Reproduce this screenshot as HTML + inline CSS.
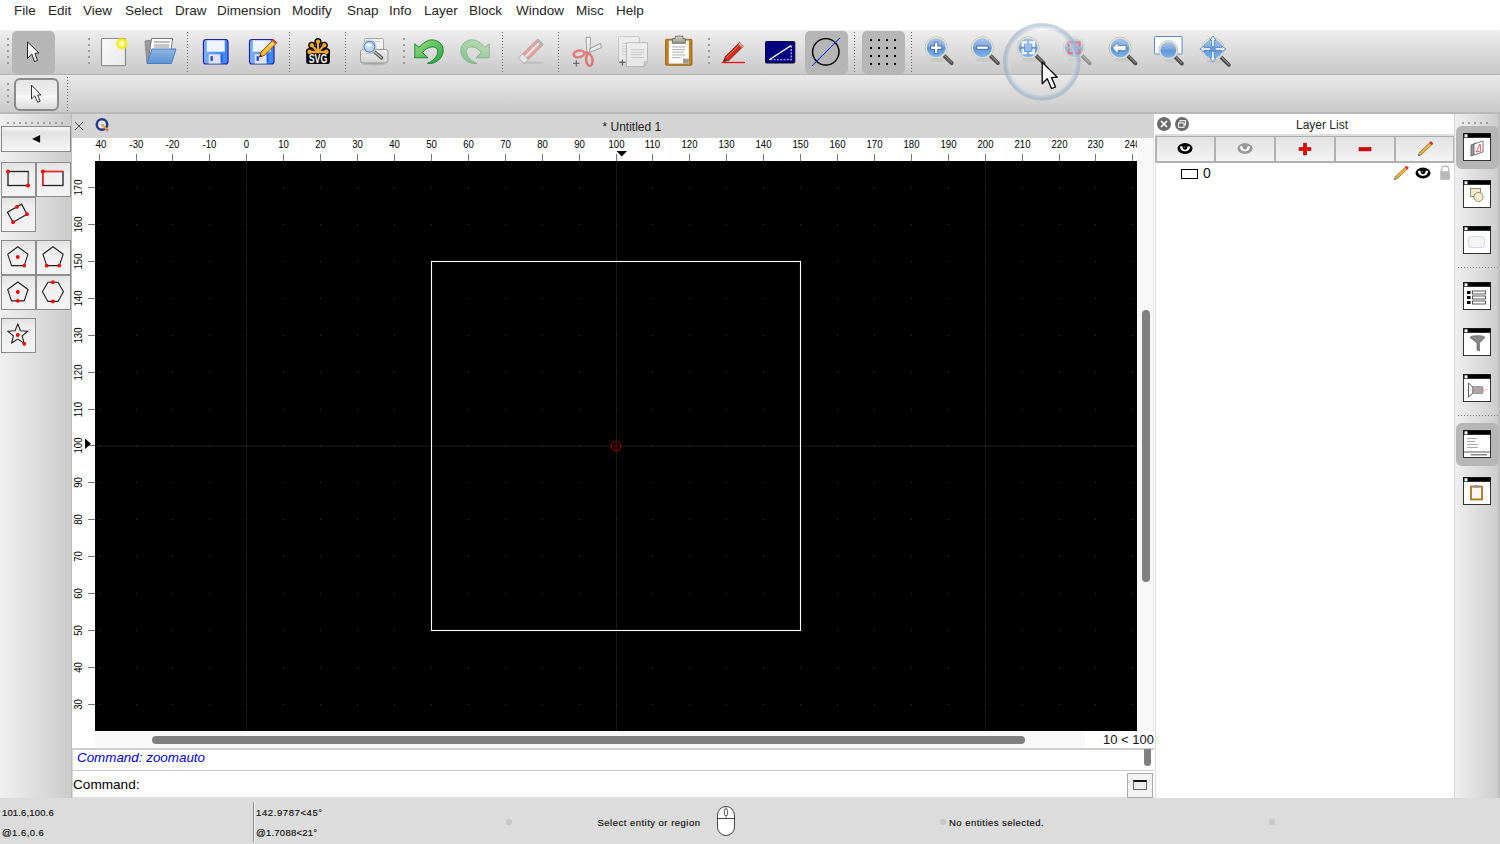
<!DOCTYPE html><html><head><meta charset="utf-8"><style>
*{margin:0;padding:0;box-sizing:border-box}
html,body{width:1500px;height:844px;overflow:hidden;background:#ececec;font-family:"Liberation Sans",sans-serif;position:relative}
.a{position:absolute}
.menu{left:0;top:0;width:1500px;height:30px;background:#fff}
.menu span{position:absolute;top:3px;font-size:13.5px;color:#262626;line-height:16px;white-space:nowrap}
.tb1{left:0;top:30px;width:1500px;height:45px;background:linear-gradient(#eeeeee,#c9c9c9);border-bottom:1px solid #b2b2b2}
.tb2{left:0;top:75px;width:1500px;height:39px;background:linear-gradient(#e8e8e8,#cbcbcb);border-bottom:2px solid #b9b9b9}
.sel{background:#b6b6b6;border-radius:5px}
.rl{position:absolute;font-size:9px;line-height:10px;color:#000;white-space:nowrap}
.st{position:absolute;font-size:9.5px;line-height:11px;color:#111;white-space:nowrap;-webkit-text-stroke:0.15px #111}
.tbtn{position:absolute;width:35px;height:35px;border:1px solid #8c8c8c;background:linear-gradient(#e2e2e2,#efefef 30%,#f3f3f3)}
</style></head><body>
<div class="a menu">
<span style="left:14px">File</span>
<span style="left:48px">Edit</span>
<span style="left:83px">View</span>
<span style="left:125px">Select</span>
<span style="left:175px">Draw</span>
<span style="left:217px">Dimension</span>
<span style="left:292px">Modify</span>
<span style="left:347px">Snap</span>
<span style="left:389px">Info</span>
<span style="left:424px">Layer</span>
<span style="left:469px">Block</span>
<span style="left:516px">Window</span>
<span style="left:576px">Misc</span>
<span style="left:616px">Help</span>
</div>
<div class="a tb1"></div><div class="a tb2"></div>
<div class="a sel" style="left:12px;top:31px;width:43px;height:43px"></div>
<div class="a sel" style="left:805px;top:31px;width:43px;height:43px"></div>
<div class="a sel" style="left:862px;top:31px;width:43px;height:43px"></div>
<div class="a" style="left:14px;top:78px;width:45px;height:33px;border:2px solid #8a8a8a;border-radius:6px;background:linear-gradient(#e4e4e4,#f1f1f1 50%,#fafafa 55%,#dadada)"></div>
<div class="a" style="left:71px;top:114px;width:1083px;height:24px;background:#d4d4d4"></div>
<div class="a" style="left:72px;top:138px;width:1065px;height:23px;background:#fff"></div>
<div class="a" style="left:72px;top:161px;width:23px;height:587px;background:#fff"></div>
<div class="a" style="left:95px;top:161px;width:1042px;height:570px;background:#000"></div>
<div class="a" style="left:1137px;top:138px;width:17px;height:610px;background:#f8f8f8;border-left:1px solid #fbfbfb;border-right:1px solid #e6e6e6"></div>
<div class="a" style="left:95px;top:731px;width:1042px;height:17px;background:#f8f8f8"></div>
<div class="a" style="left:1142px;top:310px;width:8px;height:272px;background:#808080;border-radius:4px"></div>
<div class="a" style="left:152px;top:736px;width:873px;height:8px;background:#808080;border-radius:4px"></div>
<div class="a" style="left:1085px;top:731px;width:69px;height:17px;background:#fff"></div>
<div class="a" style="left:1060px;top:731px;width:94px;height:17px;font-size:13px;line-height:17px;text-align:right;padding-right:0px;color:#111;white-space:nowrap">10 &lt; 100</div>
<div class="a" style="left:602.5px;top:119.5px;font-size:12px;line-height:14px;color:#1e1e1e;white-space:nowrap">* Untitled 1</div>
<div class="a" style="left:72px;top:748px;width:1082px;height:49px;background:#fff;border-top:2px solid #cdcdcd;border-left:1px solid #d8d8d8"></div>
<div class="a" style="left:72px;top:770px;width:1082px;height:1px;background:#c9c9c9"></div>
<div class="a" style="left:77px;top:750px;font-size:13.4px;line-height:16px;color:#0000cc;font-style:italic;white-space:nowrap">Command: zoomauto</div>
<div class="a" style="left:73px;top:777px;font-size:13.6px;line-height:16px;color:#000;white-space:nowrap">Command:</div>
<div class="a" style="left:1144px;top:749px;width:7px;height:17px;background:#808080;border-radius:0 0 3.5px 3.5px"></div>
<div class="a" style="left:0;top:797px;width:1500px;height:47px;background:#dcdcdc"></div>
<div class="st" style="left:2px;top:806.5px;letter-spacing:0.15px">101.6,100.6</div>
<div class="st" style="left:2px;top:827px;letter-spacing:0.45px">@1.6,0.6</div>
<div class="a" style="left:253px;top:802px;width:1px;height:40px;background:#8c8c8c;border-right:1px solid #fafafa;width:2px"></div>
<div class="st" style="left:256px;top:806.5px;letter-spacing:0.6px">142.9787&lt;45°</div>
<div class="st" style="left:256px;top:827px;letter-spacing:0.25px">@1.7088&lt;21°</div>
<div class="st" style="left:597.5px;top:816.5px;letter-spacing:0.48px">Select entity or region</div>
<div class="st" style="left:949px;top:817px;letter-spacing:0.46px">No entities selected.</div>
<div class="a" style="left:506px;top:819px;width:6px;height:6px;border-radius:3px;background:#c6c6c6"></div>
<div class="a" style="left:940px;top:819px;width:6px;height:6px;border-radius:3px;background:#c6c6c6"></div>
<div class="a" style="left:1269px;top:819px;width:6px;height:6px;border-radius:3px;background:#c6c6c6"></div>
<div class="a" style="left:1127px;top:773px;width:26px;height:25px;border:1px solid #aaa;background:linear-gradient(#f4f4f4,#f2f2f2)"></div>
<div class="a" style="left:1133px;top:780px;width:14px;height:10px;border:1px solid #666;border-top:2.5px solid #111;background:#efefef"></div>
<div class="a" style="left:0;top:114px;width:72px;height:684px;background:linear-gradient(90deg,#f0f0f0,#cbcbcb);border-right:1.5px solid #bcbcbc"></div>
<div class="a" style="left:1px;top:126px;width:70px;height:26px;border:1px solid #8a8a8a;background:linear-gradient(#f6f6f6,#e2e2e2 25%,#efefef 70%,#f6f6f6)"></div>
<div class="tbtn" style="left:1px;top:162px"></div>
<div class="tbtn" style="left:36px;top:162px"></div>
<div class="tbtn" style="left:1px;top:197px"></div>
<div class="tbtn" style="left:1px;top:240px"></div>
<div class="tbtn" style="left:36px;top:240px"></div>
<div class="tbtn" style="left:1px;top:275px"></div>
<div class="tbtn" style="left:36px;top:275px"></div>
<div class="tbtn" style="left:1px;top:318px"></div>
<div class="a" style="left:1154px;top:114px;width:301px;height:684px;background:#fff"></div>
<div class="a" style="left:1296px;top:118px;font-size:12px;line-height:14px;color:#262626;white-space:nowrap">Layer List</div>
<div class="a" style="left:1155px;top:134px;width:300px;height:2px;background:#dedede"></div>
<div class="a" style="left:1155px;top:136px;width:300px;height:27px;border:2px solid #b2b2b2;border-top:1.3px solid #acacac;background:linear-gradient(#e2e2e2,#f4f4f4)"></div>
<div class="a" style="left:1214px;top:136px;width:2px;height:27px;background:#b2b2b2"></div>
<div class="a" style="left:1274px;top:136px;width:2px;height:27px;background:#b2b2b2"></div>
<div class="a" style="left:1334px;top:136px;width:2px;height:27px;background:#b2b2b2"></div>
<div class="a" style="left:1394px;top:136px;width:2px;height:27px;background:#b2b2b2"></div>
<div class="a" style="left:1155px;top:162px;width:300px;height:636px;border-left:1px solid #dedede;border-right:1px solid #dedede"></div>
<div class="a" style="left:1203px;top:165px;font-size:14px;line-height:16px;color:#111">0</div>
<div class="a" style="left:1181px;top:169px;width:16.5px;height:10px;border:1.3px solid #000"></div>
<div class="a" style="left:1454px;top:114px;width:46px;height:684px;background:linear-gradient(90deg,#efefef,#cdcdcd);border-left:1px solid #d6d6d6;border-right:2px solid #c0c0c0"></div>
<div class="a sel" style="left:1456px;top:126px;width:43px;height:43px;border-radius:6px"></div>
<div class="a sel" style="left:1456px;top:423px;width:43px;height:43px;border-radius:6px"></div>
<svg class="a" style="left:0;top:0" width="1500" height="844"><defs>
<linearGradient id="gPage" x1="0" y1="0" x2="1" y2="1"><stop offset="0" stop-color="#fafafa"/><stop offset="1" stop-color="#e9e9e9"/></linearGradient>
<radialGradient id="gGlow"><stop offset="0" stop-color="#ffffff"/><stop offset="0.25" stop-color="#fbff9a"/><stop offset="0.6" stop-color="#f2ea20"/><stop offset="1" stop-color="#f2ea20" stop-opacity="0"/></radialGradient>
<linearGradient id="gFolder" x1="0" y1="0" x2="0" y2="1"><stop offset="0" stop-color="#8fb6e3"/><stop offset="1" stop-color="#5d92d3"/></linearGradient>
<linearGradient id="gFloppy" x1="0" y1="0" x2="1" y2="0"><stop offset="0" stop-color="#7fb6ff"/><stop offset="0.5" stop-color="#4f95f6"/><stop offset="1" stop-color="#3a86f5"/></linearGradient>
<linearGradient id="gUndo" x1="0" y1="0" x2="1" y2="1"><stop offset="0" stop-color="#9ad97c"/><stop offset="1" stop-color="#27a246"/></linearGradient>
<linearGradient id="gLens" x1="0" y1="0" x2="0" y2="1"><stop offset="0" stop-color="#a9c6ea"/><stop offset="0.45" stop-color="#7ea8dc"/><stop offset="0.5" stop-color="#5f95d6"/><stop offset="1" stop-color="#7fb4ef"/></linearGradient>
<linearGradient id="gPrinter" x1="0" y1="0" x2="0" y2="1"><stop offset="0" stop-color="#f6f6f6"/><stop offset="1" stop-color="#cfcfcf"/></linearGradient>
<linearGradient id="gClip" x1="0" y1="0" x2="0" y2="1"><stop offset="0" stop-color="#d9d9c9"/><stop offset="1" stop-color="#8f9084"/></linearGradient>
<linearGradient id="gPencil" x1="0" y1="0" x2="1" y2="0"><stop offset="0" stop-color="#f7b500"/><stop offset="1" stop-color="#ffe070"/></linearGradient>
</defs><rect x="7" y="38" width="2" height="2" fill="#9c9c9c"/><rect x="7" y="44" width="2" height="2" fill="#9c9c9c"/><rect x="7" y="50" width="2" height="2" fill="#9c9c9c"/><rect x="7" y="56" width="2" height="2" fill="#9c9c9c"/><rect x="7" y="62" width="2" height="2" fill="#9c9c9c"/><rect x="88" y="38" width="2" height="2" fill="#9c9c9c"/><rect x="88" y="44" width="2" height="2" fill="#9c9c9c"/><rect x="88" y="50" width="2" height="2" fill="#9c9c9c"/><rect x="88" y="56" width="2" height="2" fill="#9c9c9c"/><rect x="88" y="62" width="2" height="2" fill="#9c9c9c"/><rect x="403" y="38" width="2" height="2" fill="#9c9c9c"/><rect x="403" y="44" width="2" height="2" fill="#9c9c9c"/><rect x="403" y="50" width="2" height="2" fill="#9c9c9c"/><rect x="403" y="56" width="2" height="2" fill="#9c9c9c"/><rect x="403" y="62" width="2" height="2" fill="#9c9c9c"/><rect x="708" y="38" width="2" height="2" fill="#9c9c9c"/><rect x="708" y="44" width="2" height="2" fill="#9c9c9c"/><rect x="708" y="50" width="2" height="2" fill="#9c9c9c"/><rect x="708" y="56" width="2" height="2" fill="#9c9c9c"/><rect x="708" y="62" width="2" height="2" fill="#9c9c9c"/><line x1="187.5" y1="32" x2="187.5" y2="73" stroke="#6a6a6a" stroke-width="1" stroke-dasharray="1 2"/><line x1="289.5" y1="32" x2="289.5" y2="73" stroke="#6a6a6a" stroke-width="1" stroke-dasharray="1 2"/><line x1="345.5" y1="32" x2="345.5" y2="73" stroke="#6a6a6a" stroke-width="1" stroke-dasharray="1 2"/><line x1="502.5" y1="32" x2="502.5" y2="73" stroke="#6a6a6a" stroke-width="1" stroke-dasharray="1 2"/><line x1="558.5" y1="32" x2="558.5" y2="73" stroke="#6a6a6a" stroke-width="1" stroke-dasharray="1 2"/><line x1="854.5" y1="32" x2="854.5" y2="73" stroke="#6a6a6a" stroke-width="1" stroke-dasharray="1 2"/><line x1="911.5" y1="32" x2="911.5" y2="73" stroke="#6a6a6a" stroke-width="1" stroke-dasharray="1 2"/><rect x="7" y="83" width="2" height="2" fill="#9c9c9c"/><rect x="7" y="89" width="2" height="2" fill="#9c9c9c"/><rect x="7" y="95" width="2" height="2" fill="#9c9c9c"/><rect x="7" y="101" width="2" height="2" fill="#9c9c9c"/><line x1="67.5" y1="77" x2="67.5" y2="112" stroke="#6a6a6a" stroke-width="1" stroke-dasharray="1 2"/><path d="M27.5,42 L27.5,58.5 L31.8,54 L34.5,61.5 L37.5,60.3 L34.9,53.3 L39,53 Z" fill="#fff" stroke="#222" stroke-width="1" stroke-linejoin="round"/><path d="M31.5,85 L31.5,99 L34.8,95.8 L37.6,102.3 L40.2,101.2 L37.6,95 L41,95 Z" fill="#fff" stroke="#333" stroke-width="1" stroke-linejoin="round"/><rect x="101.5" y="38.5" width="24" height="27" rx="1" fill="url(#gPage)" stroke="#8a8a8a" stroke-width="1.2"/><line x1="102" y1="65.8" x2="125" y2="65.8" stroke="#9a9a9a" stroke-width="1"/><circle cx="121.8" cy="43.6" r="7" fill="url(#gGlow)"/><path d="M145,41 L152,40 L152,62 L147,63 Z" fill="#9a9a9a" stroke="#777" stroke-width="0.8"/><path d="M151.5,38.5 L172.7,38.5 L171,50 L148,63 Z" fill="#fafafa" stroke="#7a7a7a" stroke-width="1"/><rect x="154" y="41" width="16" height="2" fill="#bdbdbd"/><rect x="154" y="44" width="15" height="4" fill="#c6c6c6"/><path d="M152,49 L176,49 L171.5,63.5 L147,63.5 Z" fill="url(#gFolder)" stroke="#4c7fc1" stroke-width="1" stroke-linejoin="round"/><rect x="203.5" y="39.5" width="24.5" height="24.5" rx="2.5" fill="url(#gFloppy)" stroke="#2424a0" stroke-width="1.2"/><rect x="206.8" y="40.3" width="17.9" height="11.4" fill="#f0f4ff"/><rect x="208.7" y="54.3" width="11.9" height="9.3" fill="#e2e2ea"/><rect x="210.6" y="56.2" width="2.2" height="4.7" fill="#1a3ee0"/><rect x="220.8" y="54" width="1.8" height="8" fill="#1d5cf0"/><rect x="249.5" y="39.5" width="24.5" height="24.5" rx="2.5" fill="url(#gFloppy)" stroke="#2424a0" stroke-width="1.2"/><rect x="252.8" y="40.3" width="17.9" height="11.4" fill="#f0f4ff"/><rect x="254.7" y="54.3" width="11.9" height="9.3" fill="#e2e2ea"/><rect x="256.6" y="56.2" width="2.2" height="4.7" fill="#1a3ee0"/><rect x="266.8" y="54" width="1.8" height="8" fill="#1d5cf0"/><path d="M259.5,57 L261,52 L273.5,39.5 L276.8,42.8 L264.2,55.4 Z" fill="url(#gPencil)" stroke="#a0320a" stroke-width="0.9" stroke-linejoin="round"/><path d="M259.5,57 L260.3,54.4 L262,56.2 Z" fill="#222"/><path d="M272,41 L273.5,39.5 L276.8,42.8 L275.3,44.3 Z" fill="#e04a2a"/><rect x="306.2" y="48.6" width="23.7" height="15.3" rx="2.5" fill="#000"/><line x1="318" y1="52" x2="309.5" y2="51.8" stroke="#000" stroke-width="4.6" stroke-linecap="round"/><circle cx="309.5" cy="51.8" r="3.6" fill="#000"/><line x1="318" y1="52" x2="311.8" y2="45.3" stroke="#000" stroke-width="4.6" stroke-linecap="round"/><circle cx="311.8" cy="45.3" r="3.6" fill="#000"/><line x1="318" y1="52" x2="318" y2="41.6" stroke="#000" stroke-width="4.6" stroke-linecap="round"/><circle cx="318" cy="41.6" r="3.6" fill="#000"/><line x1="318" y1="52" x2="324.2" y2="45.3" stroke="#000" stroke-width="4.6" stroke-linecap="round"/><circle cx="324.2" cy="45.3" r="3.6" fill="#000"/><line x1="318" y1="52" x2="326.5" y2="51.8" stroke="#000" stroke-width="4.6" stroke-linecap="round"/><circle cx="326.5" cy="51.8" r="3.6" fill="#000"/><line x1="318" y1="52" x2="309.5" y2="51.8" stroke="#f5a72a" stroke-width="2.2" stroke-linecap="round"/><circle cx="309.5" cy="51.8" r="2.2" fill="#f5a72a"/><line x1="318" y1="52" x2="311.8" y2="45.3" stroke="#f5a72a" stroke-width="2.2" stroke-linecap="round"/><circle cx="311.8" cy="45.3" r="2.2" fill="#f5a72a"/><line x1="318" y1="52" x2="318" y2="41.6" stroke="#f5a72a" stroke-width="2.2" stroke-linecap="round"/><circle cx="318" cy="41.6" r="2.2" fill="#f5a72a"/><line x1="318" y1="52" x2="324.2" y2="45.3" stroke="#f5a72a" stroke-width="2.2" stroke-linecap="round"/><circle cx="324.2" cy="45.3" r="2.2" fill="#f5a72a"/><line x1="318" y1="52" x2="326.5" y2="51.8" stroke="#f5a72a" stroke-width="2.2" stroke-linecap="round"/><circle cx="326.5" cy="51.8" r="2.2" fill="#f5a72a"/><path d="M307.5,52.3 Q318,50 328.5,52.3 L328.5,53.3 L307.5,53.3 Z" fill="#f5a72a"/><text x="318" y="63.2" text-anchor="middle" font-family="Liberation Sans" font-weight="bold" font-size="13" fill="#fff" textLength="18.6" lengthAdjust="spacingAndGlyphs">SVG</text><rect x="364.5" y="38.5" width="19" height="13" rx="1" fill="#f2f2f2" stroke="#a8a8a8" stroke-width="1"/><rect x="367" y="41" width="13" height="1.2" fill="#cfcfcf"/><rect x="360.5" y="49.5" width="27.5" height="13.5" rx="2.5" fill="url(#gPrinter)" stroke="#9a9a9a" stroke-width="1"/><rect x="363" y="53.5" width="22" height="1" fill="#d8d8d8"/><ellipse cx="374" cy="64.2" rx="12" ry="1.2" fill="#000" opacity="0.12"/><line x1="373.5" y1="51" x2="381.6" y2="57.9" stroke="#555" stroke-width="3.4" stroke-linecap="round"/><line x1="373.8" y1="51.3" x2="381.2" y2="57.5" stroke="#bdbdbd" stroke-width="1.4" stroke-linecap="round"/><circle cx="369.4" cy="46.8" r="6.8" fill="#fafafa" stroke="#b5b5b5" stroke-width="0.8"/><circle cx="369.4" cy="46.8" r="5.4" fill="#c3d6ee" stroke="#4f86cf" stroke-width="1.2"/><ellipse cx="368.5" cy="45" rx="3.2" ry="2.2" fill="#e8f0fa"/><path d="M414.8,43.8 L414.8,57.8 L428,57.8 L422.3,52.5 C425,50 428,46.9 432,46.9 C436,46.9 438,49 437.6,52.5 C437,57 433,61 427.4,63.4 C436,64.5 443.2,58 443.2,50.5 C443.2,44 438,39.9 432,39.9 C427,39.9 423,43 419,47.4 Z" fill="url(#gUndo)" stroke="#168a33" stroke-width="1" stroke-linejoin="round"/><g transform="translate(904,0) scale(-1,1)" opacity="0.45"><path d="M414.8,43.8 L414.8,57.8 L428,57.8 L422.3,52.5 C425,50 428,46.9 432,46.9 C436,46.9 438,49 437.6,52.5 C437,57 433,61 427.4,63.4 C436,64.5 443.2,58 443.2,50.5 C443.2,44 438,39.9 432,39.9 C427,39.9 423,43 419,47.4 Z" fill="url(#gUndo)" stroke="#168a33" stroke-width="1" stroke-linejoin="round"/></g><ellipse cx="533" cy="62.8" rx="11" ry="1.4" fill="#b8b8b8" opacity="0.7"/><g transform="rotate(-45 531 51.2)" opacity="0.62"><rect x="517.5" y="47.2" width="27" height="8" rx="0.8" fill="#e87c7c" stroke="#b55" stroke-width="0.7"/><rect x="522" y="50.1" width="21" height="2.2" fill="#f6f6f6"/><rect x="517.5" y="47.2" width="5.5" height="8" fill="#f2f2f2" stroke="#999" stroke-width="0.6"/><rect x="542" y="47.2" width="2.5" height="8" fill="#9a9a9a"/></g><g opacity="0.6"><path d="M586,37.5 L590.6,37 L589.8,52.8 L586.8,52 Z" fill="#f8f8f8" stroke="#555" stroke-width="0.8" stroke-linejoin="round"/><path d="M590,48.5 L600.8,43.4 L601.2,47.7 L589.8,52.5 Z" fill="#f8f8f8" stroke="#555" stroke-width="0.8" stroke-linejoin="round"/><ellipse cx="579" cy="53.9" rx="5.4" ry="3.3" transform="rotate(-12 579 53.9)" fill="none" stroke="#e03c3c" stroke-width="2.5"/><ellipse cx="589.3" cy="59.9" rx="3.2" ry="6" transform="rotate(-6 589.3 59.9)" fill="none" stroke="#e03c3c" stroke-width="2.5"/><path d="M584,52.5 L587.5,52.8 L588.6,54.5" fill="none" stroke="#e03c3c" stroke-width="2.5"/></g><path d="M573,63.3 H579.5 M576.3,60.3 V66.5" stroke="#555" stroke-width="1" fill="none"/><g opacity="0.6"><rect x="618.5" y="36.7" width="21" height="25" rx="1" fill="#f4f4f4" stroke="#aaa" stroke-width="0.9"/><rect x="622" y="43.2" width="6" height="0.8" fill="#bbb"/><rect x="622" y="45.8" width="6" height="0.8" fill="#bbb"/><rect x="622" y="48.5" width="6" height="0.8" fill="#bbb"/><rect x="622" y="51.2" width="6" height="0.8" fill="#bbb"/><rect x="622" y="53.8" width="6" height="0.8" fill="#bbb"/><path d="M626.5,42.7 H647.5 V61.5 L644,66.7 H626.5 Z" fill="#f6f6f6" stroke="#999" stroke-width="0.9"/><path d="M647.5,61.5 L644,61.5 L644,66.7 Z" fill="#c8c8c8" stroke="#999" stroke-width="0.5"/><rect x="631" y="49.2" width="13.5" height="0.9" fill="#b5b5b5"/><rect x="631" y="51.7" width="13" height="0.9" fill="#b5b5b5"/><rect x="631" y="54.2" width="11.5" height="0.9" fill="#b5b5b5"/><rect x="631" y="57" width="13.5" height="0.9" fill="#b5b5b5"/></g><path d="M619.2,62.3 H625.5 M622.4,59.5 V65.7" stroke="#555" stroke-width="1" fill="none"/><rect x="665.5" y="39.3" width="26.5" height="26" rx="1" fill="#c0801f" stroke="#8a5a12" stroke-width="0.8"/><rect x="668.8" y="40.6" width="20" height="23" fill="#fbfbfb"/><path d="M683,58.7 H688.8 V63.6 H683 Z" fill="#9b9b94"/><rect x="672.2" y="46.5" width="13.5" height="0.9" fill="#aaa"/><rect x="672.2" y="49.2" width="13" height="0.9" fill="#aaa"/><rect x="672.2" y="51.7" width="11.5" height="0.9" fill="#aaa"/><rect x="672.2" y="54.5" width="13.5" height="0.9" fill="#aaa"/><rect x="672.2" y="57.2" width="8.5" height="0.9" fill="#aaa"/><path d="M675.3,36.2 H683 V38.6 H685.3 V43.3 H672.3 V38.6 H675.3 Z" fill="url(#gClip)" stroke="#5f6058" stroke-width="0.8"/><line x1="721.7" y1="62.5" x2="745" y2="62.5" stroke="#f00" stroke-width="1.3"/><path d="M723.5,61.5 L725.3,56.6 L739.6,42.5 L743.3,46.2 L729,60.3 Z" fill="#dd2a1a" stroke="#6a1a0a" stroke-width="0.8" stroke-linejoin="round"/><path d="M726.5,57.5 L740.5,43.6" stroke="#f47a60" stroke-width="0.9"/><path d="M723.5,61.5 L724.5,58.6 L726.5,60.5 Z" fill="#333"/><path d="M738.2,43.9 L739.6,42.5 L743.3,46.2 L741.9,47.6 Z" fill="#e8b0b0"/><rect x="765.5" y="41.5" width="29.3" height="21.5" rx="1" fill="#000080" stroke="#0a0a30" stroke-width="1"/><path d="M769.2,59.8 L791.2,45.5 L791.2,59.8 Z" fill="none" stroke="#d8d8ff" stroke-width="1.1" stroke-dasharray="2 1.3"/><line x1="769.2" y1="59.8" x2="791.2" y2="45.5" stroke="#fff" stroke-width="1.1"/><circle cx="825.8" cy="51.8" r="13.2" fill="none" stroke="#000" stroke-width="1.4"/><line x1="812" y1="66" x2="840" y2="37.8" stroke="#0000ff" stroke-width="1"/><rect x="870" y="39" width="2" height="2" fill="#000"/><rect x="870" y="47" width="2" height="2" fill="#000"/><rect x="870" y="55" width="2" height="2" fill="#000"/><rect x="870" y="63" width="2" height="2" fill="#000"/><rect x="878" y="39" width="2" height="2" fill="#000"/><rect x="878" y="47" width="2" height="2" fill="#000"/><rect x="878" y="55" width="2" height="2" fill="#000"/><rect x="878" y="63" width="2" height="2" fill="#000"/><rect x="886" y="39" width="2" height="2" fill="#000"/><rect x="886" y="47" width="2" height="2" fill="#000"/><rect x="886" y="55" width="2" height="2" fill="#000"/><rect x="886" y="63" width="2" height="2" fill="#000"/><rect x="894" y="39" width="2" height="2" fill="#000"/><rect x="894" y="47" width="2" height="2" fill="#000"/><rect x="894" y="55" width="2" height="2" fill="#000"/><rect x="894" y="63" width="2" height="2" fill="#000"/><g><ellipse cx="939.2" cy="59.900000000000006" rx="9.7" ry="2.2" fill="#000" opacity="0.05"/><line x1="944.34" y1="55.84" x2="951.7" y2="63.2" stroke="#4d4d4d" stroke-width="3.8" stroke-linecap="round"/><line x1="944.94" y1="55.84" x2="951.5" y2="62.400000000000006" stroke="#8a8a8a" stroke-width="1.2" stroke-linecap="round"/><circle cx="936.2" cy="47.7" r="11.0" fill="#f4f4f0" stroke="#bdbdb0" stroke-width="0.9"/><circle cx="936.2" cy="47.7" r="9.7" fill="url(#gLens)" stroke="#d6d6cc" stroke-width="0.6"/></g><path d="M934.6,42.1 H937.8 V46.1 H941.8 V49.3 H937.8 V53.5 H934.6 V49.3 H930.6 V46.1 H934.6 Z" fill="#fff" stroke="#2a55a0" stroke-width="0.8"/><g><ellipse cx="985.4" cy="59.900000000000006" rx="9.7" ry="2.2" fill="#000" opacity="0.05"/><line x1="990.54" y1="55.84" x2="997.9" y2="63.2" stroke="#4d4d4d" stroke-width="3.8" stroke-linecap="round"/><line x1="991.14" y1="55.84" x2="997.6999999999999" y2="62.400000000000006" stroke="#8a8a8a" stroke-width="1.2" stroke-linecap="round"/><circle cx="982.4" cy="47.7" r="11.0" fill="#f4f4f0" stroke="#bdbdb0" stroke-width="0.9"/><circle cx="982.4" cy="47.7" r="9.7" fill="url(#gLens)" stroke="#d6d6cc" stroke-width="0.6"/></g><path d="M976.7,46.1 H988.2 V49.3 H976.7 Z" fill="#fff" stroke="#2a55a0" stroke-width="0.8"/><g><ellipse cx="1031.2" cy="59.900000000000006" rx="9.7" ry="2.2" fill="#000" opacity="0.05"/><line x1="1036.3400000000001" y1="55.84" x2="1043.7" y2="63.2" stroke="#4d4d4d" stroke-width="3.8" stroke-linecap="round"/><line x1="1036.94" y1="55.84" x2="1043.5" y2="62.400000000000006" stroke="#8a8a8a" stroke-width="1.2" stroke-linecap="round"/><circle cx="1028.2" cy="47.7" r="11.0" fill="#f4f4f0" stroke="#bdbdb0" stroke-width="0.9"/><circle cx="1028.2" cy="47.7" r="9.7" fill="url(#gLens)" stroke="#d6d6cc" stroke-width="0.6"/></g><rect x="1025" y="44.5" width="6.4" height="6.4" fill="#a8c4ea" opacity="0.8"/><path d="M1022.8000000000001,45.50000000000001 V42.300000000000004 H1026.0" fill="none" stroke="#fff" stroke-width="2.3" stroke-linecap="square"/><path d="M1022.8000000000001,49.9 V53.1 H1026.0" fill="none" stroke="#fff" stroke-width="2.3" stroke-linecap="square"/><path d="M1033.6000000000001,45.50000000000001 V42.300000000000004 H1030.4" fill="none" stroke="#fff" stroke-width="2.3" stroke-linecap="square"/><path d="M1033.6000000000001,49.9 V53.1 H1030.4" fill="none" stroke="#fff" stroke-width="2.3" stroke-linecap="square"/><g opacity="0.5"><ellipse cx="1077.1" cy="59.900000000000006" rx="9.7" ry="2.2" fill="#000" opacity="0.05"/><line x1="1082.24" y1="55.84" x2="1089.6" y2="63.2" stroke="#4d4d4d" stroke-width="3.8" stroke-linecap="round"/><line x1="1082.84" y1="55.84" x2="1089.3999999999999" y2="62.400000000000006" stroke="#8a8a8a" stroke-width="1.2" stroke-linecap="round"/><circle cx="1074.1" cy="47.7" r="11.0" fill="#f4f4f0" stroke="#bdbdb0" stroke-width="0.9"/><circle cx="1074.1" cy="47.7" r="9.7" fill="url(#gLens)" stroke="#d6d6cc" stroke-width="0.6"/></g><g opacity="0.75"><path d="M1068.6999999999998,45.50000000000001 V42.300000000000004 H1071.8999999999999" fill="none" stroke="#f06a6a" stroke-width="2.3" stroke-linecap="square"/><path d="M1068.6999999999998,49.9 V53.1 H1071.8999999999999" fill="none" stroke="#f06a6a" stroke-width="2.3" stroke-linecap="square"/><path d="M1079.5,45.50000000000001 V42.300000000000004 H1076.3" fill="none" stroke="#f06a6a" stroke-width="2.3" stroke-linecap="square"/><path d="M1079.5,49.9 V53.1 H1076.3" fill="none" stroke="#f06a6a" stroke-width="2.3" stroke-linecap="square"/></g><g><ellipse cx="1123" cy="60.2" rx="9.7" ry="2.2" fill="#000" opacity="0.05"/><line x1="1128.14" y1="56.14" x2="1135.5" y2="63.5" stroke="#4d4d4d" stroke-width="3.8" stroke-linecap="round"/><line x1="1128.74" y1="56.14" x2="1135.3" y2="62.7" stroke="#8a8a8a" stroke-width="1.2" stroke-linecap="round"/><circle cx="1120" cy="48" r="11.0" fill="#f4f4f0" stroke="#bdbdb0" stroke-width="0.9"/><circle cx="1120" cy="48" r="9.7" fill="url(#gLens)" stroke="#d6d6cc" stroke-width="0.6"/></g><path d="M1112.5,48 L1118,42.6 V45.6 H1126 V50.6 H1118 V53.6 Z" fill="#fff" stroke="#3d6cb0" stroke-width="0.7"/><rect x="1154.5" y="36.5" width="27.5" height="17.5" rx="1" fill="#fff" stroke="#5a88cc" stroke-width="1"/><g><ellipse cx="1171.4" cy="60.8" rx="8.2" ry="2.2" fill="#000" opacity="0.05"/><line x1="1175.43" y1="57.13" x2="1181.9" y2="63.599999999999994" stroke="#4d4d4d" stroke-width="3.8" stroke-linecap="round"/><line x1="1176.03" y1="57.13" x2="1181.7" y2="62.8" stroke="#8a8a8a" stroke-width="1.2" stroke-linecap="round"/><circle cx="1168.4" cy="50.1" r="9.5" fill="#f4f4f0" stroke="#bdbdb0" stroke-width="0.9"/><circle cx="1168.4" cy="50.1" r="8.2" fill="url(#gLens)" stroke="#d6d6cc" stroke-width="0.6"/></g><g><ellipse cx="1215.9" cy="61.4" rx="9.9" ry="2.2" fill="#000" opacity="0.05"/><line x1="1221.188" y1="57.288" x2="1228.9" y2="65" stroke="#4d4d4d" stroke-width="3.8" stroke-linecap="round"/><line x1="1221.788" y1="57.288" x2="1228.7" y2="64.2" stroke="#8a8a8a" stroke-width="1.2" stroke-linecap="round"/><circle cx="1212.9" cy="49" r="11.200000000000001" fill="#f4f4f0" stroke="#bdbdb0" stroke-width="0.9"/><circle cx="1212.9" cy="49" r="9.9" fill="url(#gLens)" stroke="#d6d6cc" stroke-width="0.6"/></g><g transform="rotate(0 1212.9 49)"><path d="M1212.9,36 L1215.9,40.3 H1214.2 V46.8 H1211.6 V40.3 H1209.9 Z" fill="#fff" stroke="#3a78d0" stroke-width="0.8" stroke-linejoin="round"/></g><g transform="rotate(90 1212.9 49)"><path d="M1212.9,36 L1215.9,40.3 H1214.2 V46.8 H1211.6 V40.3 H1209.9 Z" fill="#fff" stroke="#3a78d0" stroke-width="0.8" stroke-linejoin="round"/></g><g transform="rotate(180 1212.9 49)"><path d="M1212.9,36 L1215.9,40.3 H1214.2 V46.8 H1211.6 V40.3 H1209.9 Z" fill="#fff" stroke="#3a78d0" stroke-width="0.8" stroke-linejoin="round"/></g><g transform="rotate(270 1212.9 49)"><path d="M1212.9,36 L1215.9,40.3 H1214.2 V46.8 H1211.6 V40.3 H1209.9 Z" fill="#fff" stroke="#3a78d0" stroke-width="0.8" stroke-linejoin="round"/></g><circle cx="1041.8" cy="61.7" r="37.3" fill="none" stroke="#8ca6c2" stroke-width="3" opacity="0.5"/><circle cx="1041.8" cy="61.7" r="35" fill="none" stroke="#a9bdd3" stroke-width="2" opacity="0.45"/><circle cx="1041.8" cy="61.7" r="33.2" fill="none" stroke="#cfdbe8" stroke-width="1.6" opacity="0.45"/><path d="M1042.2,62.3 L1042.2,83.7 L1047.3,78.8 L1051.5,88.6 L1055.5,87 L1051.5,77.6 L1057.3,77.2 Z" fill="#fff" stroke="#000" stroke-width="1.3" stroke-linejoin="round"/><defs><clipPath id="cv"><rect x="95" y="161" width="1042" height="570"/></clipPath><clipPath id="rt"><rect x="95" y="138" width="1042" height="23"/></clipPath><clipPath id="rl"><rect x="72" y="161" width="23" height="570"/></clipPath></defs><g clip-path="url(#cv)"><rect x="246" y="161" width="1" height="570" fill="#181818"/><rect x="616" y="161" width="1" height="570" fill="#181818"/><rect x="985" y="161" width="1" height="570" fill="#181818"/><rect x="95" y="445.5" width="1042" height="1" fill="#1c1c1c"/><rect x="99" y="704" width="1" height="1" fill="#3a3a3a"/><rect x="99" y="667" width="1" height="1" fill="#3a3a3a"/><rect x="99" y="630" width="1" height="1" fill="#3a3a3a"/><rect x="99" y="593" width="1" height="1" fill="#3a3a3a"/><rect x="99" y="556" width="1" height="1" fill="#3a3a3a"/><rect x="99" y="519" width="1" height="1" fill="#3a3a3a"/><rect x="99" y="482" width="1" height="1" fill="#3a3a3a"/><rect x="99" y="445" width="1" height="1" fill="#3a3a3a"/><rect x="99" y="409" width="1" height="1" fill="#3a3a3a"/><rect x="99" y="372" width="1" height="1" fill="#3a3a3a"/><rect x="99" y="335" width="1" height="1" fill="#3a3a3a"/><rect x="99" y="298" width="1" height="1" fill="#3a3a3a"/><rect x="99" y="261" width="1" height="1" fill="#3a3a3a"/><rect x="99" y="224" width="1" height="1" fill="#3a3a3a"/><rect x="99" y="187" width="1" height="1" fill="#3a3a3a"/><rect x="136" y="704" width="1" height="1" fill="#3a3a3a"/><rect x="136" y="667" width="1" height="1" fill="#3a3a3a"/><rect x="136" y="630" width="1" height="1" fill="#3a3a3a"/><rect x="136" y="593" width="1" height="1" fill="#3a3a3a"/><rect x="136" y="556" width="1" height="1" fill="#3a3a3a"/><rect x="136" y="519" width="1" height="1" fill="#3a3a3a"/><rect x="136" y="482" width="1" height="1" fill="#3a3a3a"/><rect x="136" y="445" width="1" height="1" fill="#3a3a3a"/><rect x="136" y="409" width="1" height="1" fill="#3a3a3a"/><rect x="136" y="372" width="1" height="1" fill="#3a3a3a"/><rect x="136" y="335" width="1" height="1" fill="#3a3a3a"/><rect x="136" y="298" width="1" height="1" fill="#3a3a3a"/><rect x="136" y="261" width="1" height="1" fill="#3a3a3a"/><rect x="136" y="224" width="1" height="1" fill="#3a3a3a"/><rect x="136" y="187" width="1" height="1" fill="#3a3a3a"/><rect x="172" y="704" width="1" height="1" fill="#3a3a3a"/><rect x="172" y="667" width="1" height="1" fill="#3a3a3a"/><rect x="172" y="630" width="1" height="1" fill="#3a3a3a"/><rect x="172" y="593" width="1" height="1" fill="#3a3a3a"/><rect x="172" y="556" width="1" height="1" fill="#3a3a3a"/><rect x="172" y="519" width="1" height="1" fill="#3a3a3a"/><rect x="172" y="482" width="1" height="1" fill="#3a3a3a"/><rect x="172" y="445" width="1" height="1" fill="#3a3a3a"/><rect x="172" y="409" width="1" height="1" fill="#3a3a3a"/><rect x="172" y="372" width="1" height="1" fill="#3a3a3a"/><rect x="172" y="335" width="1" height="1" fill="#3a3a3a"/><rect x="172" y="298" width="1" height="1" fill="#3a3a3a"/><rect x="172" y="261" width="1" height="1" fill="#3a3a3a"/><rect x="172" y="224" width="1" height="1" fill="#3a3a3a"/><rect x="172" y="187" width="1" height="1" fill="#3a3a3a"/><rect x="209" y="704" width="1" height="1" fill="#3a3a3a"/><rect x="209" y="667" width="1" height="1" fill="#3a3a3a"/><rect x="209" y="630" width="1" height="1" fill="#3a3a3a"/><rect x="209" y="593" width="1" height="1" fill="#3a3a3a"/><rect x="209" y="556" width="1" height="1" fill="#3a3a3a"/><rect x="209" y="519" width="1" height="1" fill="#3a3a3a"/><rect x="209" y="482" width="1" height="1" fill="#3a3a3a"/><rect x="209" y="445" width="1" height="1" fill="#3a3a3a"/><rect x="209" y="409" width="1" height="1" fill="#3a3a3a"/><rect x="209" y="372" width="1" height="1" fill="#3a3a3a"/><rect x="209" y="335" width="1" height="1" fill="#3a3a3a"/><rect x="209" y="298" width="1" height="1" fill="#3a3a3a"/><rect x="209" y="261" width="1" height="1" fill="#3a3a3a"/><rect x="209" y="224" width="1" height="1" fill="#3a3a3a"/><rect x="209" y="187" width="1" height="1" fill="#3a3a3a"/><rect x="246" y="704" width="1" height="1" fill="#3a3a3a"/><rect x="246" y="667" width="1" height="1" fill="#3a3a3a"/><rect x="246" y="630" width="1" height="1" fill="#3a3a3a"/><rect x="246" y="593" width="1" height="1" fill="#3a3a3a"/><rect x="246" y="556" width="1" height="1" fill="#3a3a3a"/><rect x="246" y="519" width="1" height="1" fill="#3a3a3a"/><rect x="246" y="482" width="1" height="1" fill="#3a3a3a"/><rect x="246" y="445" width="1" height="1" fill="#3a3a3a"/><rect x="246" y="409" width="1" height="1" fill="#3a3a3a"/><rect x="246" y="372" width="1" height="1" fill="#3a3a3a"/><rect x="246" y="335" width="1" height="1" fill="#3a3a3a"/><rect x="246" y="298" width="1" height="1" fill="#3a3a3a"/><rect x="246" y="261" width="1" height="1" fill="#3a3a3a"/><rect x="246" y="224" width="1" height="1" fill="#3a3a3a"/><rect x="246" y="187" width="1" height="1" fill="#3a3a3a"/><rect x="283" y="704" width="1" height="1" fill="#3a3a3a"/><rect x="283" y="667" width="1" height="1" fill="#3a3a3a"/><rect x="283" y="630" width="1" height="1" fill="#3a3a3a"/><rect x="283" y="593" width="1" height="1" fill="#3a3a3a"/><rect x="283" y="556" width="1" height="1" fill="#3a3a3a"/><rect x="283" y="519" width="1" height="1" fill="#3a3a3a"/><rect x="283" y="482" width="1" height="1" fill="#3a3a3a"/><rect x="283" y="445" width="1" height="1" fill="#3a3a3a"/><rect x="283" y="409" width="1" height="1" fill="#3a3a3a"/><rect x="283" y="372" width="1" height="1" fill="#3a3a3a"/><rect x="283" y="335" width="1" height="1" fill="#3a3a3a"/><rect x="283" y="298" width="1" height="1" fill="#3a3a3a"/><rect x="283" y="261" width="1" height="1" fill="#3a3a3a"/><rect x="283" y="224" width="1" height="1" fill="#3a3a3a"/><rect x="283" y="187" width="1" height="1" fill="#3a3a3a"/><rect x="320" y="704" width="1" height="1" fill="#3a3a3a"/><rect x="320" y="667" width="1" height="1" fill="#3a3a3a"/><rect x="320" y="630" width="1" height="1" fill="#3a3a3a"/><rect x="320" y="593" width="1" height="1" fill="#3a3a3a"/><rect x="320" y="556" width="1" height="1" fill="#3a3a3a"/><rect x="320" y="519" width="1" height="1" fill="#3a3a3a"/><rect x="320" y="482" width="1" height="1" fill="#3a3a3a"/><rect x="320" y="445" width="1" height="1" fill="#3a3a3a"/><rect x="320" y="409" width="1" height="1" fill="#3a3a3a"/><rect x="320" y="372" width="1" height="1" fill="#3a3a3a"/><rect x="320" y="335" width="1" height="1" fill="#3a3a3a"/><rect x="320" y="298" width="1" height="1" fill="#3a3a3a"/><rect x="320" y="261" width="1" height="1" fill="#3a3a3a"/><rect x="320" y="224" width="1" height="1" fill="#3a3a3a"/><rect x="320" y="187" width="1" height="1" fill="#3a3a3a"/><rect x="357" y="704" width="1" height="1" fill="#3a3a3a"/><rect x="357" y="667" width="1" height="1" fill="#3a3a3a"/><rect x="357" y="630" width="1" height="1" fill="#3a3a3a"/><rect x="357" y="593" width="1" height="1" fill="#3a3a3a"/><rect x="357" y="556" width="1" height="1" fill="#3a3a3a"/><rect x="357" y="519" width="1" height="1" fill="#3a3a3a"/><rect x="357" y="482" width="1" height="1" fill="#3a3a3a"/><rect x="357" y="445" width="1" height="1" fill="#3a3a3a"/><rect x="357" y="409" width="1" height="1" fill="#3a3a3a"/><rect x="357" y="372" width="1" height="1" fill="#3a3a3a"/><rect x="357" y="335" width="1" height="1" fill="#3a3a3a"/><rect x="357" y="298" width="1" height="1" fill="#3a3a3a"/><rect x="357" y="261" width="1" height="1" fill="#3a3a3a"/><rect x="357" y="224" width="1" height="1" fill="#3a3a3a"/><rect x="357" y="187" width="1" height="1" fill="#3a3a3a"/><rect x="394" y="704" width="1" height="1" fill="#3a3a3a"/><rect x="394" y="667" width="1" height="1" fill="#3a3a3a"/><rect x="394" y="630" width="1" height="1" fill="#3a3a3a"/><rect x="394" y="593" width="1" height="1" fill="#3a3a3a"/><rect x="394" y="556" width="1" height="1" fill="#3a3a3a"/><rect x="394" y="519" width="1" height="1" fill="#3a3a3a"/><rect x="394" y="482" width="1" height="1" fill="#3a3a3a"/><rect x="394" y="445" width="1" height="1" fill="#3a3a3a"/><rect x="394" y="409" width="1" height="1" fill="#3a3a3a"/><rect x="394" y="372" width="1" height="1" fill="#3a3a3a"/><rect x="394" y="335" width="1" height="1" fill="#3a3a3a"/><rect x="394" y="298" width="1" height="1" fill="#3a3a3a"/><rect x="394" y="261" width="1" height="1" fill="#3a3a3a"/><rect x="394" y="224" width="1" height="1" fill="#3a3a3a"/><rect x="394" y="187" width="1" height="1" fill="#3a3a3a"/><rect x="431" y="704" width="1" height="1" fill="#3a3a3a"/><rect x="431" y="667" width="1" height="1" fill="#3a3a3a"/><rect x="431" y="630" width="1" height="1" fill="#3a3a3a"/><rect x="431" y="593" width="1" height="1" fill="#3a3a3a"/><rect x="431" y="556" width="1" height="1" fill="#3a3a3a"/><rect x="431" y="519" width="1" height="1" fill="#3a3a3a"/><rect x="431" y="482" width="1" height="1" fill="#3a3a3a"/><rect x="431" y="445" width="1" height="1" fill="#3a3a3a"/><rect x="431" y="409" width="1" height="1" fill="#3a3a3a"/><rect x="431" y="372" width="1" height="1" fill="#3a3a3a"/><rect x="431" y="335" width="1" height="1" fill="#3a3a3a"/><rect x="431" y="298" width="1" height="1" fill="#3a3a3a"/><rect x="431" y="261" width="1" height="1" fill="#3a3a3a"/><rect x="431" y="224" width="1" height="1" fill="#3a3a3a"/><rect x="431" y="187" width="1" height="1" fill="#3a3a3a"/><rect x="468" y="704" width="1" height="1" fill="#3a3a3a"/><rect x="468" y="667" width="1" height="1" fill="#3a3a3a"/><rect x="468" y="630" width="1" height="1" fill="#3a3a3a"/><rect x="468" y="593" width="1" height="1" fill="#3a3a3a"/><rect x="468" y="556" width="1" height="1" fill="#3a3a3a"/><rect x="468" y="519" width="1" height="1" fill="#3a3a3a"/><rect x="468" y="482" width="1" height="1" fill="#3a3a3a"/><rect x="468" y="445" width="1" height="1" fill="#3a3a3a"/><rect x="468" y="409" width="1" height="1" fill="#3a3a3a"/><rect x="468" y="372" width="1" height="1" fill="#3a3a3a"/><rect x="468" y="335" width="1" height="1" fill="#3a3a3a"/><rect x="468" y="298" width="1" height="1" fill="#3a3a3a"/><rect x="468" y="261" width="1" height="1" fill="#3a3a3a"/><rect x="468" y="224" width="1" height="1" fill="#3a3a3a"/><rect x="468" y="187" width="1" height="1" fill="#3a3a3a"/><rect x="505" y="704" width="1" height="1" fill="#3a3a3a"/><rect x="505" y="667" width="1" height="1" fill="#3a3a3a"/><rect x="505" y="630" width="1" height="1" fill="#3a3a3a"/><rect x="505" y="593" width="1" height="1" fill="#3a3a3a"/><rect x="505" y="556" width="1" height="1" fill="#3a3a3a"/><rect x="505" y="519" width="1" height="1" fill="#3a3a3a"/><rect x="505" y="482" width="1" height="1" fill="#3a3a3a"/><rect x="505" y="445" width="1" height="1" fill="#3a3a3a"/><rect x="505" y="409" width="1" height="1" fill="#3a3a3a"/><rect x="505" y="372" width="1" height="1" fill="#3a3a3a"/><rect x="505" y="335" width="1" height="1" fill="#3a3a3a"/><rect x="505" y="298" width="1" height="1" fill="#3a3a3a"/><rect x="505" y="261" width="1" height="1" fill="#3a3a3a"/><rect x="505" y="224" width="1" height="1" fill="#3a3a3a"/><rect x="505" y="187" width="1" height="1" fill="#3a3a3a"/><rect x="542" y="704" width="1" height="1" fill="#3a3a3a"/><rect x="542" y="667" width="1" height="1" fill="#3a3a3a"/><rect x="542" y="630" width="1" height="1" fill="#3a3a3a"/><rect x="542" y="593" width="1" height="1" fill="#3a3a3a"/><rect x="542" y="556" width="1" height="1" fill="#3a3a3a"/><rect x="542" y="519" width="1" height="1" fill="#3a3a3a"/><rect x="542" y="482" width="1" height="1" fill="#3a3a3a"/><rect x="542" y="445" width="1" height="1" fill="#3a3a3a"/><rect x="542" y="409" width="1" height="1" fill="#3a3a3a"/><rect x="542" y="372" width="1" height="1" fill="#3a3a3a"/><rect x="542" y="335" width="1" height="1" fill="#3a3a3a"/><rect x="542" y="298" width="1" height="1" fill="#3a3a3a"/><rect x="542" y="261" width="1" height="1" fill="#3a3a3a"/><rect x="542" y="224" width="1" height="1" fill="#3a3a3a"/><rect x="542" y="187" width="1" height="1" fill="#3a3a3a"/><rect x="579" y="704" width="1" height="1" fill="#3a3a3a"/><rect x="579" y="667" width="1" height="1" fill="#3a3a3a"/><rect x="579" y="630" width="1" height="1" fill="#3a3a3a"/><rect x="579" y="593" width="1" height="1" fill="#3a3a3a"/><rect x="579" y="556" width="1" height="1" fill="#3a3a3a"/><rect x="579" y="519" width="1" height="1" fill="#3a3a3a"/><rect x="579" y="482" width="1" height="1" fill="#3a3a3a"/><rect x="579" y="445" width="1" height="1" fill="#3a3a3a"/><rect x="579" y="409" width="1" height="1" fill="#3a3a3a"/><rect x="579" y="372" width="1" height="1" fill="#3a3a3a"/><rect x="579" y="335" width="1" height="1" fill="#3a3a3a"/><rect x="579" y="298" width="1" height="1" fill="#3a3a3a"/><rect x="579" y="261" width="1" height="1" fill="#3a3a3a"/><rect x="579" y="224" width="1" height="1" fill="#3a3a3a"/><rect x="579" y="187" width="1" height="1" fill="#3a3a3a"/><rect x="616" y="704" width="1" height="1" fill="#3a3a3a"/><rect x="616" y="667" width="1" height="1" fill="#3a3a3a"/><rect x="616" y="630" width="1" height="1" fill="#3a3a3a"/><rect x="616" y="593" width="1" height="1" fill="#3a3a3a"/><rect x="616" y="556" width="1" height="1" fill="#3a3a3a"/><rect x="616" y="519" width="1" height="1" fill="#3a3a3a"/><rect x="616" y="482" width="1" height="1" fill="#3a3a3a"/><rect x="616" y="445" width="1" height="1" fill="#3a3a3a"/><rect x="616" y="409" width="1" height="1" fill="#3a3a3a"/><rect x="616" y="372" width="1" height="1" fill="#3a3a3a"/><rect x="616" y="335" width="1" height="1" fill="#3a3a3a"/><rect x="616" y="298" width="1" height="1" fill="#3a3a3a"/><rect x="616" y="261" width="1" height="1" fill="#3a3a3a"/><rect x="616" y="224" width="1" height="1" fill="#3a3a3a"/><rect x="616" y="187" width="1" height="1" fill="#3a3a3a"/><rect x="652" y="704" width="1" height="1" fill="#3a3a3a"/><rect x="652" y="667" width="1" height="1" fill="#3a3a3a"/><rect x="652" y="630" width="1" height="1" fill="#3a3a3a"/><rect x="652" y="593" width="1" height="1" fill="#3a3a3a"/><rect x="652" y="556" width="1" height="1" fill="#3a3a3a"/><rect x="652" y="519" width="1" height="1" fill="#3a3a3a"/><rect x="652" y="482" width="1" height="1" fill="#3a3a3a"/><rect x="652" y="445" width="1" height="1" fill="#3a3a3a"/><rect x="652" y="409" width="1" height="1" fill="#3a3a3a"/><rect x="652" y="372" width="1" height="1" fill="#3a3a3a"/><rect x="652" y="335" width="1" height="1" fill="#3a3a3a"/><rect x="652" y="298" width="1" height="1" fill="#3a3a3a"/><rect x="652" y="261" width="1" height="1" fill="#3a3a3a"/><rect x="652" y="224" width="1" height="1" fill="#3a3a3a"/><rect x="652" y="187" width="1" height="1" fill="#3a3a3a"/><rect x="689" y="704" width="1" height="1" fill="#3a3a3a"/><rect x="689" y="667" width="1" height="1" fill="#3a3a3a"/><rect x="689" y="630" width="1" height="1" fill="#3a3a3a"/><rect x="689" y="593" width="1" height="1" fill="#3a3a3a"/><rect x="689" y="556" width="1" height="1" fill="#3a3a3a"/><rect x="689" y="519" width="1" height="1" fill="#3a3a3a"/><rect x="689" y="482" width="1" height="1" fill="#3a3a3a"/><rect x="689" y="445" width="1" height="1" fill="#3a3a3a"/><rect x="689" y="409" width="1" height="1" fill="#3a3a3a"/><rect x="689" y="372" width="1" height="1" fill="#3a3a3a"/><rect x="689" y="335" width="1" height="1" fill="#3a3a3a"/><rect x="689" y="298" width="1" height="1" fill="#3a3a3a"/><rect x="689" y="261" width="1" height="1" fill="#3a3a3a"/><rect x="689" y="224" width="1" height="1" fill="#3a3a3a"/><rect x="689" y="187" width="1" height="1" fill="#3a3a3a"/><rect x="726" y="704" width="1" height="1" fill="#3a3a3a"/><rect x="726" y="667" width="1" height="1" fill="#3a3a3a"/><rect x="726" y="630" width="1" height="1" fill="#3a3a3a"/><rect x="726" y="593" width="1" height="1" fill="#3a3a3a"/><rect x="726" y="556" width="1" height="1" fill="#3a3a3a"/><rect x="726" y="519" width="1" height="1" fill="#3a3a3a"/><rect x="726" y="482" width="1" height="1" fill="#3a3a3a"/><rect x="726" y="445" width="1" height="1" fill="#3a3a3a"/><rect x="726" y="409" width="1" height="1" fill="#3a3a3a"/><rect x="726" y="372" width="1" height="1" fill="#3a3a3a"/><rect x="726" y="335" width="1" height="1" fill="#3a3a3a"/><rect x="726" y="298" width="1" height="1" fill="#3a3a3a"/><rect x="726" y="261" width="1" height="1" fill="#3a3a3a"/><rect x="726" y="224" width="1" height="1" fill="#3a3a3a"/><rect x="726" y="187" width="1" height="1" fill="#3a3a3a"/><rect x="763" y="704" width="1" height="1" fill="#3a3a3a"/><rect x="763" y="667" width="1" height="1" fill="#3a3a3a"/><rect x="763" y="630" width="1" height="1" fill="#3a3a3a"/><rect x="763" y="593" width="1" height="1" fill="#3a3a3a"/><rect x="763" y="556" width="1" height="1" fill="#3a3a3a"/><rect x="763" y="519" width="1" height="1" fill="#3a3a3a"/><rect x="763" y="482" width="1" height="1" fill="#3a3a3a"/><rect x="763" y="445" width="1" height="1" fill="#3a3a3a"/><rect x="763" y="409" width="1" height="1" fill="#3a3a3a"/><rect x="763" y="372" width="1" height="1" fill="#3a3a3a"/><rect x="763" y="335" width="1" height="1" fill="#3a3a3a"/><rect x="763" y="298" width="1" height="1" fill="#3a3a3a"/><rect x="763" y="261" width="1" height="1" fill="#3a3a3a"/><rect x="763" y="224" width="1" height="1" fill="#3a3a3a"/><rect x="763" y="187" width="1" height="1" fill="#3a3a3a"/><rect x="800" y="704" width="1" height="1" fill="#3a3a3a"/><rect x="800" y="667" width="1" height="1" fill="#3a3a3a"/><rect x="800" y="630" width="1" height="1" fill="#3a3a3a"/><rect x="800" y="593" width="1" height="1" fill="#3a3a3a"/><rect x="800" y="556" width="1" height="1" fill="#3a3a3a"/><rect x="800" y="519" width="1" height="1" fill="#3a3a3a"/><rect x="800" y="482" width="1" height="1" fill="#3a3a3a"/><rect x="800" y="445" width="1" height="1" fill="#3a3a3a"/><rect x="800" y="409" width="1" height="1" fill="#3a3a3a"/><rect x="800" y="372" width="1" height="1" fill="#3a3a3a"/><rect x="800" y="335" width="1" height="1" fill="#3a3a3a"/><rect x="800" y="298" width="1" height="1" fill="#3a3a3a"/><rect x="800" y="261" width="1" height="1" fill="#3a3a3a"/><rect x="800" y="224" width="1" height="1" fill="#3a3a3a"/><rect x="800" y="187" width="1" height="1" fill="#3a3a3a"/><rect x="837" y="704" width="1" height="1" fill="#3a3a3a"/><rect x="837" y="667" width="1" height="1" fill="#3a3a3a"/><rect x="837" y="630" width="1" height="1" fill="#3a3a3a"/><rect x="837" y="593" width="1" height="1" fill="#3a3a3a"/><rect x="837" y="556" width="1" height="1" fill="#3a3a3a"/><rect x="837" y="519" width="1" height="1" fill="#3a3a3a"/><rect x="837" y="482" width="1" height="1" fill="#3a3a3a"/><rect x="837" y="445" width="1" height="1" fill="#3a3a3a"/><rect x="837" y="409" width="1" height="1" fill="#3a3a3a"/><rect x="837" y="372" width="1" height="1" fill="#3a3a3a"/><rect x="837" y="335" width="1" height="1" fill="#3a3a3a"/><rect x="837" y="298" width="1" height="1" fill="#3a3a3a"/><rect x="837" y="261" width="1" height="1" fill="#3a3a3a"/><rect x="837" y="224" width="1" height="1" fill="#3a3a3a"/><rect x="837" y="187" width="1" height="1" fill="#3a3a3a"/><rect x="874" y="704" width="1" height="1" fill="#3a3a3a"/><rect x="874" y="667" width="1" height="1" fill="#3a3a3a"/><rect x="874" y="630" width="1" height="1" fill="#3a3a3a"/><rect x="874" y="593" width="1" height="1" fill="#3a3a3a"/><rect x="874" y="556" width="1" height="1" fill="#3a3a3a"/><rect x="874" y="519" width="1" height="1" fill="#3a3a3a"/><rect x="874" y="482" width="1" height="1" fill="#3a3a3a"/><rect x="874" y="445" width="1" height="1" fill="#3a3a3a"/><rect x="874" y="409" width="1" height="1" fill="#3a3a3a"/><rect x="874" y="372" width="1" height="1" fill="#3a3a3a"/><rect x="874" y="335" width="1" height="1" fill="#3a3a3a"/><rect x="874" y="298" width="1" height="1" fill="#3a3a3a"/><rect x="874" y="261" width="1" height="1" fill="#3a3a3a"/><rect x="874" y="224" width="1" height="1" fill="#3a3a3a"/><rect x="874" y="187" width="1" height="1" fill="#3a3a3a"/><rect x="911" y="704" width="1" height="1" fill="#3a3a3a"/><rect x="911" y="667" width="1" height="1" fill="#3a3a3a"/><rect x="911" y="630" width="1" height="1" fill="#3a3a3a"/><rect x="911" y="593" width="1" height="1" fill="#3a3a3a"/><rect x="911" y="556" width="1" height="1" fill="#3a3a3a"/><rect x="911" y="519" width="1" height="1" fill="#3a3a3a"/><rect x="911" y="482" width="1" height="1" fill="#3a3a3a"/><rect x="911" y="445" width="1" height="1" fill="#3a3a3a"/><rect x="911" y="409" width="1" height="1" fill="#3a3a3a"/><rect x="911" y="372" width="1" height="1" fill="#3a3a3a"/><rect x="911" y="335" width="1" height="1" fill="#3a3a3a"/><rect x="911" y="298" width="1" height="1" fill="#3a3a3a"/><rect x="911" y="261" width="1" height="1" fill="#3a3a3a"/><rect x="911" y="224" width="1" height="1" fill="#3a3a3a"/><rect x="911" y="187" width="1" height="1" fill="#3a3a3a"/><rect x="948" y="704" width="1" height="1" fill="#3a3a3a"/><rect x="948" y="667" width="1" height="1" fill="#3a3a3a"/><rect x="948" y="630" width="1" height="1" fill="#3a3a3a"/><rect x="948" y="593" width="1" height="1" fill="#3a3a3a"/><rect x="948" y="556" width="1" height="1" fill="#3a3a3a"/><rect x="948" y="519" width="1" height="1" fill="#3a3a3a"/><rect x="948" y="482" width="1" height="1" fill="#3a3a3a"/><rect x="948" y="445" width="1" height="1" fill="#3a3a3a"/><rect x="948" y="409" width="1" height="1" fill="#3a3a3a"/><rect x="948" y="372" width="1" height="1" fill="#3a3a3a"/><rect x="948" y="335" width="1" height="1" fill="#3a3a3a"/><rect x="948" y="298" width="1" height="1" fill="#3a3a3a"/><rect x="948" y="261" width="1" height="1" fill="#3a3a3a"/><rect x="948" y="224" width="1" height="1" fill="#3a3a3a"/><rect x="948" y="187" width="1" height="1" fill="#3a3a3a"/><rect x="985" y="704" width="1" height="1" fill="#3a3a3a"/><rect x="985" y="667" width="1" height="1" fill="#3a3a3a"/><rect x="985" y="630" width="1" height="1" fill="#3a3a3a"/><rect x="985" y="593" width="1" height="1" fill="#3a3a3a"/><rect x="985" y="556" width="1" height="1" fill="#3a3a3a"/><rect x="985" y="519" width="1" height="1" fill="#3a3a3a"/><rect x="985" y="482" width="1" height="1" fill="#3a3a3a"/><rect x="985" y="445" width="1" height="1" fill="#3a3a3a"/><rect x="985" y="409" width="1" height="1" fill="#3a3a3a"/><rect x="985" y="372" width="1" height="1" fill="#3a3a3a"/><rect x="985" y="335" width="1" height="1" fill="#3a3a3a"/><rect x="985" y="298" width="1" height="1" fill="#3a3a3a"/><rect x="985" y="261" width="1" height="1" fill="#3a3a3a"/><rect x="985" y="224" width="1" height="1" fill="#3a3a3a"/><rect x="985" y="187" width="1" height="1" fill="#3a3a3a"/><rect x="1022" y="704" width="1" height="1" fill="#3a3a3a"/><rect x="1022" y="667" width="1" height="1" fill="#3a3a3a"/><rect x="1022" y="630" width="1" height="1" fill="#3a3a3a"/><rect x="1022" y="593" width="1" height="1" fill="#3a3a3a"/><rect x="1022" y="556" width="1" height="1" fill="#3a3a3a"/><rect x="1022" y="519" width="1" height="1" fill="#3a3a3a"/><rect x="1022" y="482" width="1" height="1" fill="#3a3a3a"/><rect x="1022" y="445" width="1" height="1" fill="#3a3a3a"/><rect x="1022" y="409" width="1" height="1" fill="#3a3a3a"/><rect x="1022" y="372" width="1" height="1" fill="#3a3a3a"/><rect x="1022" y="335" width="1" height="1" fill="#3a3a3a"/><rect x="1022" y="298" width="1" height="1" fill="#3a3a3a"/><rect x="1022" y="261" width="1" height="1" fill="#3a3a3a"/><rect x="1022" y="224" width="1" height="1" fill="#3a3a3a"/><rect x="1022" y="187" width="1" height="1" fill="#3a3a3a"/><rect x="1059" y="704" width="1" height="1" fill="#3a3a3a"/><rect x="1059" y="667" width="1" height="1" fill="#3a3a3a"/><rect x="1059" y="630" width="1" height="1" fill="#3a3a3a"/><rect x="1059" y="593" width="1" height="1" fill="#3a3a3a"/><rect x="1059" y="556" width="1" height="1" fill="#3a3a3a"/><rect x="1059" y="519" width="1" height="1" fill="#3a3a3a"/><rect x="1059" y="482" width="1" height="1" fill="#3a3a3a"/><rect x="1059" y="445" width="1" height="1" fill="#3a3a3a"/><rect x="1059" y="409" width="1" height="1" fill="#3a3a3a"/><rect x="1059" y="372" width="1" height="1" fill="#3a3a3a"/><rect x="1059" y="335" width="1" height="1" fill="#3a3a3a"/><rect x="1059" y="298" width="1" height="1" fill="#3a3a3a"/><rect x="1059" y="261" width="1" height="1" fill="#3a3a3a"/><rect x="1059" y="224" width="1" height="1" fill="#3a3a3a"/><rect x="1059" y="187" width="1" height="1" fill="#3a3a3a"/><rect x="1095" y="704" width="1" height="1" fill="#3a3a3a"/><rect x="1095" y="667" width="1" height="1" fill="#3a3a3a"/><rect x="1095" y="630" width="1" height="1" fill="#3a3a3a"/><rect x="1095" y="593" width="1" height="1" fill="#3a3a3a"/><rect x="1095" y="556" width="1" height="1" fill="#3a3a3a"/><rect x="1095" y="519" width="1" height="1" fill="#3a3a3a"/><rect x="1095" y="482" width="1" height="1" fill="#3a3a3a"/><rect x="1095" y="445" width="1" height="1" fill="#3a3a3a"/><rect x="1095" y="409" width="1" height="1" fill="#3a3a3a"/><rect x="1095" y="372" width="1" height="1" fill="#3a3a3a"/><rect x="1095" y="335" width="1" height="1" fill="#3a3a3a"/><rect x="1095" y="298" width="1" height="1" fill="#3a3a3a"/><rect x="1095" y="261" width="1" height="1" fill="#3a3a3a"/><rect x="1095" y="224" width="1" height="1" fill="#3a3a3a"/><rect x="1095" y="187" width="1" height="1" fill="#3a3a3a"/><rect x="1132" y="704" width="1" height="1" fill="#3a3a3a"/><rect x="1132" y="667" width="1" height="1" fill="#3a3a3a"/><rect x="1132" y="630" width="1" height="1" fill="#3a3a3a"/><rect x="1132" y="593" width="1" height="1" fill="#3a3a3a"/><rect x="1132" y="556" width="1" height="1" fill="#3a3a3a"/><rect x="1132" y="519" width="1" height="1" fill="#3a3a3a"/><rect x="1132" y="482" width="1" height="1" fill="#3a3a3a"/><rect x="1132" y="445" width="1" height="1" fill="#3a3a3a"/><rect x="1132" y="409" width="1" height="1" fill="#3a3a3a"/><rect x="1132" y="372" width="1" height="1" fill="#3a3a3a"/><rect x="1132" y="335" width="1" height="1" fill="#3a3a3a"/><rect x="1132" y="298" width="1" height="1" fill="#3a3a3a"/><rect x="1132" y="261" width="1" height="1" fill="#3a3a3a"/><rect x="1132" y="224" width="1" height="1" fill="#3a3a3a"/><rect x="1132" y="187" width="1" height="1" fill="#3a3a3a"/><rect x="431.5" y="261.5" width="369" height="369" fill="none" stroke="#fff" stroke-width="1.1"/><circle cx="616.0" cy="446.0" r="4.7" fill="none" stroke="#900000" stroke-width="1.1"/><path d="M611.5,446.0 H620.5 M616.0,441.5 V450.5" stroke="#550000" stroke-width="1"/></g><g clip-path="url(#rt)"><rect x="99" y="154" width="1" height="7" fill="#777"/><text transform="translate(99.5 147.5) scale(1 1.1)" text-anchor="middle" font-family="Liberation Sans" font-size="9.6" fill="#000">-40</text><rect x="136" y="154" width="1" height="7" fill="#777"/><text transform="translate(136.5 147.5) scale(1 1.1)" text-anchor="middle" font-family="Liberation Sans" font-size="9.6" fill="#000">-30</text><rect x="172" y="154" width="1" height="7" fill="#777"/><text transform="translate(172.5 147.5) scale(1 1.1)" text-anchor="middle" font-family="Liberation Sans" font-size="9.6" fill="#000">-20</text><rect x="209" y="154" width="1" height="7" fill="#777"/><text transform="translate(209.5 147.5) scale(1 1.1)" text-anchor="middle" font-family="Liberation Sans" font-size="9.6" fill="#000">-10</text><rect x="246" y="154" width="1" height="7" fill="#777"/><text transform="translate(246.5 147.5) scale(1 1.1)" text-anchor="middle" font-family="Liberation Sans" font-size="9.6" fill="#000">0</text><rect x="283" y="154" width="1" height="7" fill="#777"/><text transform="translate(283.5 147.5) scale(1 1.1)" text-anchor="middle" font-family="Liberation Sans" font-size="9.6" fill="#000">10</text><rect x="320" y="154" width="1" height="7" fill="#777"/><text transform="translate(320.5 147.5) scale(1 1.1)" text-anchor="middle" font-family="Liberation Sans" font-size="9.6" fill="#000">20</text><rect x="357" y="154" width="1" height="7" fill="#777"/><text transform="translate(357.5 147.5) scale(1 1.1)" text-anchor="middle" font-family="Liberation Sans" font-size="9.6" fill="#000">30</text><rect x="394" y="154" width="1" height="7" fill="#777"/><text transform="translate(394.5 147.5) scale(1 1.1)" text-anchor="middle" font-family="Liberation Sans" font-size="9.6" fill="#000">40</text><rect x="431" y="154" width="1" height="7" fill="#777"/><text transform="translate(431.5 147.5) scale(1 1.1)" text-anchor="middle" font-family="Liberation Sans" font-size="9.6" fill="#000">50</text><rect x="468" y="154" width="1" height="7" fill="#777"/><text transform="translate(468.5 147.5) scale(1 1.1)" text-anchor="middle" font-family="Liberation Sans" font-size="9.6" fill="#000">60</text><rect x="505" y="154" width="1" height="7" fill="#777"/><text transform="translate(505.5 147.5) scale(1 1.1)" text-anchor="middle" font-family="Liberation Sans" font-size="9.6" fill="#000">70</text><rect x="542" y="154" width="1" height="7" fill="#777"/><text transform="translate(542.5 147.5) scale(1 1.1)" text-anchor="middle" font-family="Liberation Sans" font-size="9.6" fill="#000">80</text><rect x="579" y="154" width="1" height="7" fill="#777"/><text transform="translate(579.5 147.5) scale(1 1.1)" text-anchor="middle" font-family="Liberation Sans" font-size="9.6" fill="#000">90</text><rect x="616" y="154" width="1" height="7" fill="#777"/><text transform="translate(616.5 147.5) scale(1 1.1)" text-anchor="middle" font-family="Liberation Sans" font-size="9.6" fill="#000">100</text><rect x="652" y="154" width="1" height="7" fill="#777"/><text transform="translate(652.5 147.5) scale(1 1.1)" text-anchor="middle" font-family="Liberation Sans" font-size="9.6" fill="#000">110</text><rect x="689" y="154" width="1" height="7" fill="#777"/><text transform="translate(689.5 147.5) scale(1 1.1)" text-anchor="middle" font-family="Liberation Sans" font-size="9.6" fill="#000">120</text><rect x="726" y="154" width="1" height="7" fill="#777"/><text transform="translate(726.5 147.5) scale(1 1.1)" text-anchor="middle" font-family="Liberation Sans" font-size="9.6" fill="#000">130</text><rect x="763" y="154" width="1" height="7" fill="#777"/><text transform="translate(763.5 147.5) scale(1 1.1)" text-anchor="middle" font-family="Liberation Sans" font-size="9.6" fill="#000">140</text><rect x="800" y="154" width="1" height="7" fill="#777"/><text transform="translate(800.5 147.5) scale(1 1.1)" text-anchor="middle" font-family="Liberation Sans" font-size="9.6" fill="#000">150</text><rect x="837" y="154" width="1" height="7" fill="#777"/><text transform="translate(837.5 147.5) scale(1 1.1)" text-anchor="middle" font-family="Liberation Sans" font-size="9.6" fill="#000">160</text><rect x="874" y="154" width="1" height="7" fill="#777"/><text transform="translate(874.5 147.5) scale(1 1.1)" text-anchor="middle" font-family="Liberation Sans" font-size="9.6" fill="#000">170</text><rect x="911" y="154" width="1" height="7" fill="#777"/><text transform="translate(911.5 147.5) scale(1 1.1)" text-anchor="middle" font-family="Liberation Sans" font-size="9.6" fill="#000">180</text><rect x="948" y="154" width="1" height="7" fill="#777"/><text transform="translate(948.5 147.5) scale(1 1.1)" text-anchor="middle" font-family="Liberation Sans" font-size="9.6" fill="#000">190</text><rect x="985" y="154" width="1" height="7" fill="#777"/><text transform="translate(985.5 147.5) scale(1 1.1)" text-anchor="middle" font-family="Liberation Sans" font-size="9.6" fill="#000">200</text><rect x="1022" y="154" width="1" height="7" fill="#777"/><text transform="translate(1022.5 147.5) scale(1 1.1)" text-anchor="middle" font-family="Liberation Sans" font-size="9.6" fill="#000">210</text><rect x="1059" y="154" width="1" height="7" fill="#777"/><text transform="translate(1059.5 147.5) scale(1 1.1)" text-anchor="middle" font-family="Liberation Sans" font-size="9.6" fill="#000">220</text><rect x="1095" y="154" width="1" height="7" fill="#777"/><text transform="translate(1095.5 147.5) scale(1 1.1)" text-anchor="middle" font-family="Liberation Sans" font-size="9.6" fill="#000">230</text><rect x="1132" y="154" width="1" height="7" fill="#777"/><text transform="translate(1132.5 147.5) scale(1 1.1)" text-anchor="middle" font-family="Liberation Sans" font-size="9.6" fill="#000">240</text></g><path d="M616.5,151 L627,151 L621.8,156.5 Z" fill="#000"/><g clip-path="url(#rl)"><rect x="88" y="741" width="7" height="1" fill="#777"/><text transform="translate(82 741.5) rotate(-90) scale(1 1.1)" text-anchor="middle" font-family="Liberation Sans" font-size="9.6" fill="#000">20</text><rect x="88" y="704" width="7" height="1" fill="#777"/><text transform="translate(82 704.5) rotate(-90) scale(1 1.1)" text-anchor="middle" font-family="Liberation Sans" font-size="9.6" fill="#000">30</text><rect x="88" y="667" width="7" height="1" fill="#777"/><text transform="translate(82 667.5) rotate(-90) scale(1 1.1)" text-anchor="middle" font-family="Liberation Sans" font-size="9.6" fill="#000">40</text><rect x="88" y="630" width="7" height="1" fill="#777"/><text transform="translate(82 630.5) rotate(-90) scale(1 1.1)" text-anchor="middle" font-family="Liberation Sans" font-size="9.6" fill="#000">50</text><rect x="88" y="593" width="7" height="1" fill="#777"/><text transform="translate(82 593.5) rotate(-90) scale(1 1.1)" text-anchor="middle" font-family="Liberation Sans" font-size="9.6" fill="#000">60</text><rect x="88" y="556" width="7" height="1" fill="#777"/><text transform="translate(82 556.5) rotate(-90) scale(1 1.1)" text-anchor="middle" font-family="Liberation Sans" font-size="9.6" fill="#000">70</text><rect x="88" y="519" width="7" height="1" fill="#777"/><text transform="translate(82 519.5) rotate(-90) scale(1 1.1)" text-anchor="middle" font-family="Liberation Sans" font-size="9.6" fill="#000">80</text><rect x="88" y="482" width="7" height="1" fill="#777"/><text transform="translate(82 482.5) rotate(-90) scale(1 1.1)" text-anchor="middle" font-family="Liberation Sans" font-size="9.6" fill="#000">90</text><rect x="88" y="445" width="7" height="1" fill="#777"/><text transform="translate(82 445.5) rotate(-90) scale(1 1.1)" text-anchor="middle" font-family="Liberation Sans" font-size="9.6" fill="#000">100</text><rect x="88" y="409" width="7" height="1" fill="#777"/><text transform="translate(82 409.5) rotate(-90) scale(1 1.1)" text-anchor="middle" font-family="Liberation Sans" font-size="9.6" fill="#000">110</text><rect x="88" y="372" width="7" height="1" fill="#777"/><text transform="translate(82 372.5) rotate(-90) scale(1 1.1)" text-anchor="middle" font-family="Liberation Sans" font-size="9.6" fill="#000">120</text><rect x="88" y="335" width="7" height="1" fill="#777"/><text transform="translate(82 335.5) rotate(-90) scale(1 1.1)" text-anchor="middle" font-family="Liberation Sans" font-size="9.6" fill="#000">130</text><rect x="88" y="298" width="7" height="1" fill="#777"/><text transform="translate(82 298.5) rotate(-90) scale(1 1.1)" text-anchor="middle" font-family="Liberation Sans" font-size="9.6" fill="#000">140</text><rect x="88" y="261" width="7" height="1" fill="#777"/><text transform="translate(82 261.5) rotate(-90) scale(1 1.1)" text-anchor="middle" font-family="Liberation Sans" font-size="9.6" fill="#000">150</text><rect x="88" y="224" width="7" height="1" fill="#777"/><text transform="translate(82 224.5) rotate(-90) scale(1 1.1)" text-anchor="middle" font-family="Liberation Sans" font-size="9.6" fill="#000">160</text><rect x="88" y="187" width="7" height="1" fill="#777"/><text transform="translate(82 187.5) rotate(-90) scale(1 1.1)" text-anchor="middle" font-family="Liberation Sans" font-size="9.6" fill="#000">170</text><rect x="88" y="150" width="7" height="1" fill="#777"/><text transform="translate(82 150.5) rotate(-90) scale(1 1.1)" text-anchor="middle" font-family="Liberation Sans" font-size="9.6" fill="#000">180</text></g><path d="M85,438.5 L85,449 L91,443.7 Z" fill="#000"/><rect x="7" y="122" width="2" height="2" fill="#a0a0a0"/><rect x="13" y="122" width="2" height="2" fill="#a0a0a0"/><rect x="19" y="122" width="2" height="2" fill="#a0a0a0"/><rect x="25" y="122" width="2" height="2" fill="#a0a0a0"/><rect x="31" y="122" width="2" height="2" fill="#a0a0a0"/><rect x="37" y="122" width="2" height="2" fill="#a0a0a0"/><rect x="43" y="122" width="2" height="2" fill="#a0a0a0"/><rect x="49" y="122" width="2" height="2" fill="#a0a0a0"/><rect x="55" y="122" width="2" height="2" fill="#a0a0a0"/><rect x="61" y="122" width="2" height="2" fill="#a0a0a0"/><path d="M32.1,139 L40.1,135 L40.1,142.7 Z" fill="#000"/><rect x="8" y="171.5" width="20.4" height="14" fill="none" stroke="#222" stroke-width="1.3"/><path d="M8,171.5 V185.5 M28.4,171.5 V185.5" stroke="#666" stroke-width="1.3"/><circle cx="8" cy="171.5" r="1.9" fill="#ff0000"/><circle cx="28" cy="185.5" r="1.9" fill="#ff0000"/><rect x="42.8" y="171.5" width="20.2" height="14" fill="none" stroke="#222" stroke-width="1.3"/><path d="M63,171.5 V185.5" stroke="#666" stroke-width="1.3"/><path d="M42.8,185.5 V171.5 H63" fill="none" stroke="#ff2020" stroke-width="1.3"/><circle cx="42.8" cy="171.5" r="1.9" fill="#ff0000"/><path d="M7.4,212.3 L21.6,204.2 L27,214.2 L13.1,222.2 Z" fill="none" stroke="#222" stroke-width="1.2"/><circle cx="16.9" cy="206.9" r="1.9" fill="#ff0000"/><circle cx="27" cy="214.2" r="1.9" fill="#ff0000"/><circle cx="13.1" cy="222.2" r="1.9" fill="#ff0000"/><path d="M17.80,246.70 L28.00,254.20 L24.20,265.60 L11.50,265.60 L7.70,254.20 Z" fill="none" stroke="#222" stroke-width="1.1" stroke-linejoin="round"/><circle cx="17.8" cy="257" r="1.9" fill="#ff0000"/><circle cx="24.2" cy="265.6" r="1.9" fill="#ff0000"/><path d="M53.00,246.70 L63.20,254.20 L59.40,265.60 L46.70,265.60 L42.90,254.20 Z" fill="none" stroke="#222" stroke-width="1.1" stroke-linejoin="round"/><circle cx="46.7" cy="265.6" r="1.9" fill="#ff0000"/><circle cx="59.2" cy="265.6" r="1.9" fill="#ff0000"/><path d="M17.80,282.00 L28.00,289.50 L24.20,300.90 L11.50,300.90 L7.70,289.50 Z" fill="none" stroke="#222" stroke-width="1.1" stroke-linejoin="round"/><circle cx="17.8" cy="292" r="1.9" fill="#ff0000"/><circle cx="17.8" cy="300.8" r="1.9" fill="#ff0000"/><path d="M47.90,282.20 L58.00,282.20 L63.50,291.80 L58.00,301.40 L47.90,301.40 L42.40,291.80 Z" fill="none" stroke="#222" stroke-width="1.1" stroke-linejoin="round"/><circle cx="52.9" cy="282.2" r="1.9" fill="#ff0000"/><circle cx="52.9" cy="301.4" r="1.9" fill="#ff0000"/><path d="M17.80,323.90 L20.50,330.78 L27.88,331.22 L22.17,335.92 L24.03,343.08 L17.80,339.10 L11.57,343.08 L13.43,335.92 L7.72,331.22 L15.10,330.78 Z" fill="none" stroke="#222" stroke-width="1.1" stroke-linejoin="round"/><circle cx="17.8" cy="335" r="1.9" fill="#ff0000"/><circle cx="24.3" cy="343.8" r="1.9" fill="#ff0000"/><path d="M75,122 L83,130 M83,122 L75,130" stroke="#555" stroke-width="1"/><circle cx="102" cy="124.5" r="5.2" fill="#f2f2f2" stroke="#253c8c" stroke-width="2.6"/><path d="M99,124.5 H105 M102,121.5 V127.5" stroke="#aaa" stroke-width="0.6"/><path d="M102.5,125 L106.8,129.5" stroke="#f0a020" stroke-width="2"/><path d="M106.5,129.2 L108,130.8" stroke="#e06060" stroke-width="2"/><circle cx="1164" cy="124" r="7" fill="#6b6b6b"/><path d="M1161,121 L1167,127 M1167,121 L1161,127" stroke="#fff" stroke-width="1.7"/><circle cx="1182" cy="124" r="7" fill="#6b6b6b"/><rect x="1180" y="120.7" width="5.5" height="4.3" fill="none" stroke="#fff" stroke-width="1"/><rect x="1178.5" y="123" width="5.5" height="4.3" fill="#6b6b6b" stroke="#fff" stroke-width="1"/><g transform="translate(1185 148.5) scale(1.0)"><ellipse cx="0" cy="0" rx="7.5" ry="5.4" fill="#000"/><path d="M-5,-1.8 C-5,4.4 5,4.4 5,-1.8 C4.2,-2.4 3.2,-2.4 2.4,-1.8 C2.6,2.2 -2.6,2.2 -2.4,-1.8 C-3.2,-2.4 -4.2,-2.4 -5,-1.8 Z" fill="#fff"/><circle cx="-0.8" cy="-1.3" r="0.8" fill="#888"/></g><g transform="translate(1245 148.5) scale(1.0)"><ellipse cx="0" cy="0" rx="7.5" ry="5.4" fill="#9a9a9a"/><path d="M-5,-1.8 C-5,4.4 5,4.4 5,-1.8 C4.2,-2.4 3.2,-2.4 2.4,-1.8 C2.6,2.2 -2.6,2.2 -2.4,-1.8 C-3.2,-2.4 -4.2,-2.4 -5,-1.8 Z" fill="#fff"/><circle cx="-0.8" cy="-1.3" r="0.8" fill="#888"/></g><path d="M1303.5,143.2 H1306.5 V147.6 H1311 V150.6 H1306.5 V155 H1303.5 V150.6 H1299 V147.6 H1303.5 Z" fill="#e60000" stroke="#a00000" stroke-width="0.6"/><rect x="1359" y="147.5" width="12" height="3.4" fill="#e60000" stroke="#a00000" stroke-width="0.6"/><path d="M1418.50,155.50 L1421.81,154.32 L1433.01,143.54 L1430.99,141.46 L1419.80,152.24 Z" fill="#e9b048" stroke="#8a6010" stroke-width="0.6" stroke-linejoin="round"/><path d="M1431.42,145.07 L1433.01,143.54 L1430.99,141.46 L1429.41,142.98 Z" fill="#e8202a"/><path d="M1418.50,155.50 L1421.81,154.32 L1419.80,152.24 Z" fill="#f2dcb0" stroke="#8a6010" stroke-width="0.5"/><circle cx="1418.93" cy="155.08" r="0.7" fill="#444"/><path d="M1394.50,179.30 L1397.82,178.15 L1408.50,168.05 L1406.50,165.95 L1395.83,176.05 Z" fill="#e9b048" stroke="#8a6010" stroke-width="0.6" stroke-linejoin="round"/><path d="M1406.90,169.57 L1408.50,168.05 L1406.50,165.95 L1404.91,167.46 Z" fill="#e8202a"/><path d="M1394.50,179.30 L1397.82,178.15 L1395.83,176.05 Z" fill="#f2dcb0" stroke="#8a6010" stroke-width="0.5"/><circle cx="1394.94" cy="178.89" r="0.7" fill="#444"/><g transform="translate(1423 173) scale(1.0)"><ellipse cx="0" cy="0" rx="7.5" ry="5.4" fill="#000"/><path d="M-5,-1.8 C-5,4.4 5,4.4 5,-1.8 C4.2,-2.4 3.2,-2.4 2.4,-1.8 C2.6,2.2 -2.6,2.2 -2.4,-1.8 C-3.2,-2.4 -4.2,-2.4 -5,-1.8 Z" fill="#fff"/><circle cx="-0.8" cy="-1.3" r="0.8" fill="#888"/></g><path d="M1441.5,171.5 V169.5 C1441.5,164.8 1448.7,164.8 1448.7,169.5 V171.5" fill="none" stroke="#bdbdbd" stroke-width="1.5"/><rect x="1440.2" y="171.2" width="9.8" height="8.6" fill="#b8b8b8"/><rect x="1462" y="122" width="2" height="2" fill="#a0a0a0"/><rect x="1468" y="122" width="2" height="2" fill="#a0a0a0"/><rect x="1474" y="122" width="2" height="2" fill="#a0a0a0"/><rect x="1480" y="122" width="2" height="2" fill="#a0a0a0"/><rect x="1486" y="122" width="2" height="2" fill="#a0a0a0"/><rect x="1458" y="267" width="1" height="1" fill="#7a7a7a"/><rect x="1461" y="267" width="1" height="1" fill="#7a7a7a"/><rect x="1464" y="267" width="1" height="1" fill="#7a7a7a"/><rect x="1467" y="267" width="1" height="1" fill="#7a7a7a"/><rect x="1470" y="267" width="1" height="1" fill="#7a7a7a"/><rect x="1473" y="267" width="1" height="1" fill="#7a7a7a"/><rect x="1476" y="267" width="1" height="1" fill="#7a7a7a"/><rect x="1479" y="267" width="1" height="1" fill="#7a7a7a"/><rect x="1482" y="267" width="1" height="1" fill="#7a7a7a"/><rect x="1485" y="267" width="1" height="1" fill="#7a7a7a"/><rect x="1488" y="267" width="1" height="1" fill="#7a7a7a"/><rect x="1491" y="267" width="1" height="1" fill="#7a7a7a"/><rect x="1494" y="267" width="1" height="1" fill="#7a7a7a"/><rect x="1497" y="267" width="1" height="1" fill="#7a7a7a"/><rect x="1458" y="415" width="1" height="1" fill="#7a7a7a"/><rect x="1461" y="415" width="1" height="1" fill="#7a7a7a"/><rect x="1464" y="415" width="1" height="1" fill="#7a7a7a"/><rect x="1467" y="415" width="1" height="1" fill="#7a7a7a"/><rect x="1470" y="415" width="1" height="1" fill="#7a7a7a"/><rect x="1473" y="415" width="1" height="1" fill="#7a7a7a"/><rect x="1476" y="415" width="1" height="1" fill="#7a7a7a"/><rect x="1479" y="415" width="1" height="1" fill="#7a7a7a"/><rect x="1482" y="415" width="1" height="1" fill="#7a7a7a"/><rect x="1485" y="415" width="1" height="1" fill="#7a7a7a"/><rect x="1488" y="415" width="1" height="1" fill="#7a7a7a"/><rect x="1491" y="415" width="1" height="1" fill="#7a7a7a"/><rect x="1494" y="415" width="1" height="1" fill="#7a7a7a"/><rect x="1497" y="415" width="1" height="1" fill="#7a7a7a"/><rect x="1463.5" y="133.5" width="27" height="27" fill="#fff" stroke="#333" stroke-width="1"/><rect x="1463.5" y="133.5" width="27" height="4.3" fill="#000"/><rect x="1464.5" y="134.3" width="3" height="2.9" fill="#fff"/><rect x="1463.5" y="180.5" width="27" height="27" fill="#fff" stroke="#333" stroke-width="1"/><rect x="1463.5" y="180.5" width="27" height="4.3" fill="#000"/><rect x="1464.5" y="181.3" width="3" height="2.9" fill="#fff"/><rect x="1463.5" y="226.5" width="27" height="27" fill="#fff" stroke="#333" stroke-width="1"/><rect x="1463.5" y="226.5" width="27" height="4.3" fill="#000"/><rect x="1464.5" y="227.3" width="3" height="2.9" fill="#fff"/><rect x="1463.5" y="282.5" width="27" height="27" fill="#fff" stroke="#333" stroke-width="1"/><rect x="1463.5" y="282.5" width="27" height="4.3" fill="#000"/><rect x="1464.5" y="283.3" width="3" height="2.9" fill="#fff"/><rect x="1463.5" y="328.5" width="27" height="27" fill="#fff" stroke="#333" stroke-width="1"/><rect x="1463.5" y="328.5" width="27" height="4.3" fill="#000"/><rect x="1464.5" y="329.3" width="3" height="2.9" fill="#fff"/><rect x="1463.5" y="374.5" width="27" height="27" fill="#fff" stroke="#333" stroke-width="1"/><rect x="1463.5" y="374.5" width="27" height="4.3" fill="#000"/><rect x="1464.5" y="375.3" width="3" height="2.9" fill="#fff"/><rect x="1463.5" y="430.5" width="27" height="27" fill="#fff" stroke="#333" stroke-width="1"/><rect x="1463.5" y="430.5" width="27" height="4.3" fill="#000"/><rect x="1464.5" y="431.3" width="3" height="2.9" fill="#fff"/><rect x="1463.5" y="477.5" width="27" height="27" fill="#fff" stroke="#333" stroke-width="1"/><rect x="1463.5" y="477.5" width="27" height="4.3" fill="#000"/><rect x="1464.5" y="478.3" width="3" height="2.9" fill="#fff"/><path d="M1471,145 L1476,143 L1476,154 L1471,156 Z" fill="#999" stroke="#555" stroke-width="0.8"/><path d="M1474,144 L1483,141 L1483,152 L1474,155 Z" fill="#fff" stroke="#555" stroke-width="0.8"/><path d="M1476,152 L1480,144 L1481,151 Z" fill="none" stroke="#f03030" stroke-width="0.8"/><rect x="1470.5" y="188.5" width="10" height="8" fill="#f4ecc4" stroke="#777" stroke-width="0.8"/><circle cx="1478.5" cy="197" r="4.6" fill="#f4ecc4" stroke="#777" stroke-width="0.8"/><rect x="1468.5" y="236.5" width="16" height="11" rx="2.5" fill="#f4f4f4" stroke="#c8d4ec" stroke-width="0.9"/><rect x="1467" y="291" width="3.5" height="3" fill="#000"/><rect x="1472.5" y="291" width="13" height="3" fill="none" stroke="#333" stroke-width="0.8"/><rect x="1467" y="296" width="3.5" height="3" fill="#000"/><rect x="1472.5" y="296" width="13" height="3" fill="none" stroke="#333" stroke-width="0.8"/><rect x="1467" y="301" width="3.5" height="3" fill="#000"/><rect x="1472.5" y="301" width="13" height="3" fill="none" stroke="#333" stroke-width="0.8"/><path d="M1470,337.5 C1470,335 1485,335 1485,337.5 L1479.5,343 V351 L1477,350 V343 Z" fill="#888" stroke="#555" stroke-width="0.6"/><path d="M1468.5,383 L1473,387 V393 L1468.5,397 Z" fill="#fff" stroke="#333" stroke-width="0.8"/><rect x="1473" y="386.5" width="10" height="7" rx="1.5" fill="#aaa" stroke="#666" stroke-width="0.6"/><line x1="1467" y1="390" x2="1488" y2="390" stroke="#f08080" stroke-width="0.8" stroke-dasharray="1.5 1"/><rect x="1467" y="438" width="10" height="1" fill="#aaa"/><rect x="1467" y="441" width="8" height="1" fill="#aaa"/><rect x="1467" y="444" width="11" height="1" fill="#aaa"/><rect x="1467" y="447" width="11" height="1" fill="#aaa"/><line x1="1463.5" y1="452" x2="1490.5" y2="452" stroke="#333" stroke-width="0.8"/><rect x="1471" y="454" width="16" height="1.5" fill="#888"/><rect x="1470.5" y="486" width="12" height="14" fill="#c0801f" stroke="#8a5a12" stroke-width="0.6"/><rect x="1472" y="487.5" width="9" height="11" fill="#f6f6f6"/><rect x="1474" y="485" width="5" height="3" fill="#999"/><rect x="717.5" y="806.5" width="17" height="29" rx="8.5" fill="#fff" stroke="#333" stroke-width="0.9"/><path d="M717.8,818.5 H734.5" stroke="#333" stroke-width="0.9"/><path d="M726,806.5 V818.5" stroke="#333" stroke-width="0.6"/><rect x="724.4" y="808.8" width="3.2" height="7" rx="1.6" fill="#fff" stroke="#333" stroke-width="0.8"/></svg>
</body></html>
